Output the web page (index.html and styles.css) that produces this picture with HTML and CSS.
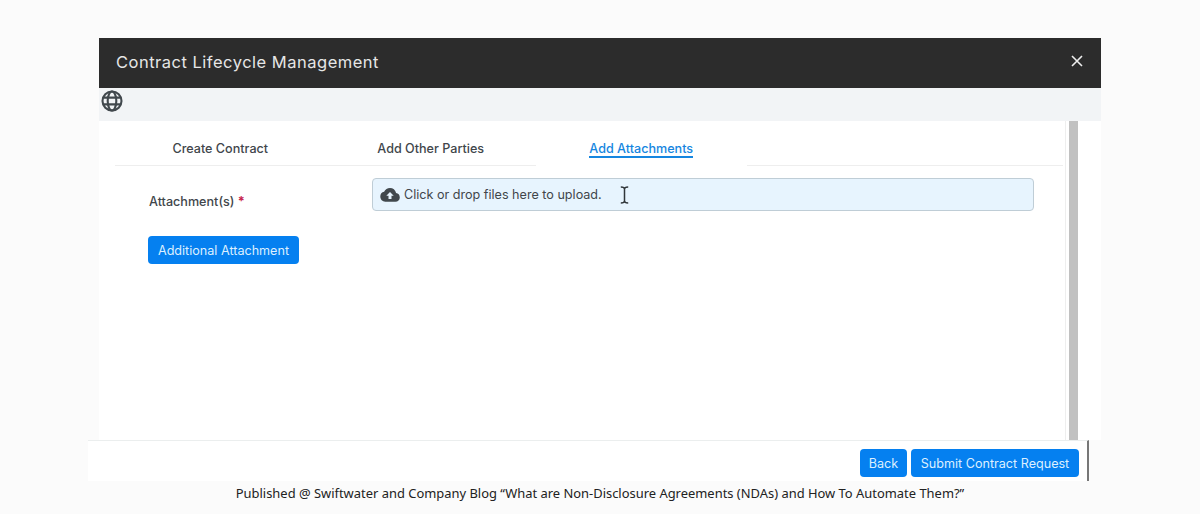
FILE: index.html
```html
<!DOCTYPE html>
<html lang="en">
  <head>
    <meta charset="UTF-8" />
    <meta name="viewport" content="width=device-width, initial-scale=1" />
    <title>Contract Lifecycle Management</title>
    <link rel="stylesheet" href="styles.css">
  </head>
  <body>
    <section class="dialog">
      <header>
        <h1>Contract Lifecycle Management</h1>
        <button class="close" aria-label="Close">
          <svg width="12" height="12" viewBox="0 0 12 12"><path d="M1 1l10 10M11 1L1 11" /></svg>
        </button>
      </header>
      <div class="toolbar">
        <svg class="globe" width="22" height="22" viewBox="0 0 22 22">
          <circle cx="11" cy="11" r="9.5" />
          <ellipse cx="11" cy="11" rx="4.3" ry="9.5" />
          <path d="M2.200 7.600h17.600M2.200 14.400h17.600" />
        </svg>
      </div>
      <div class="content">
        <main>
          <nav class="tabs">
            <a class="tab">Create Contract</a>
            <a class="tab">Add Other Parties</a>
            <a class="tab active"><span>Add Attachments</span></a>
            <div class="tab-rest"></div>
          </nav>
          <div class="field">
            <label>Attachment(s) <span class="required">*</span></label>
            <div class="dropzone">
              <svg class="cloud" width="20" height="16" viewBox="0 0 20 16">
                <path d="M16.1 6.1C15.5 2.900 12.900 1 10 1 7.400 1 5.200 2.400 4.100 4.800 1.700 5.200.3 7.100.3 9.500c0 2.900 2.200 5.200 5 5.200h10.100c2.500 0 4.400-1.900 4.400-4.300 0-2.300-1.600-4.100-3.700-4.300zM11.500 8.700v3.400h-3V8.700H6.300L10 4.900l3.700 3.800z" />
              </svg>
              <span>Click or drop files here to upload.</span>
              <svg class="cursor" width="9" height="18" viewBox="0 0 9 18">
                <path d="M.8 1C3 1 4.500 1.500 4.500 3v12c0 1.500-1.500 2-3.700 2M8.200 1C6 1 4.500 1.500 4.500 3M8.200 17c-2.200 0-3.700-.5-3.700-2" />
              </svg>
            </div>
          </div>
          <button class="btn additional">Additional Attachment</button>
        </main>
        <div class="scrollbar"></div>
      </div>
    </section>
    <div class="actions">
      <button class="btn back">Back</button>
      <button class="btn submit">Submit Contract Request</button>
    </div>
    <footer>Published @ Swiftwater and Company Blog “What are Non-Disclosure Agreements (NDAs) and How To Automate Them?”</footer>
  </body>
</html>
```

FILE: styles.css
```css
* {
  box-sizing: border-box;
}

body {
  margin: 0;
  padding-top: 38px;
  height: 514px;
  background: #fbfbfb;
  font-family: Inter, 'Liberation Sans', sans-serif;
  font-size: 12.6px;
  color: #41464b;
  overflow: hidden;
}

.dialog {
  width: 1002px;
  margin-left: 99px;
  background: #fff;
}

header {
  display: flex;
  align-items: center;
  justify-content: space-between;
  height: 50px;
  padding: 0 18px 2px 17px;
  background: #2c2c2c;
}

h1 {
  margin: 0;
  font-size: 16.5px;
  font-weight: 400;
  letter-spacing: 0.5px;
  color: #e6e6e6;
}

button {
  font-family: inherit;
  border: none;
}

.close {
  display: flex;
  padding: 0 0 2px;
  background: none;
}

.close path {
  fill: none;
  stroke: #eee;
  stroke-width: 1.6;
}

.toolbar {
  height: 33px;
  padding: 2px;
  background: #f2f4f6;
}

.globe {
  display: block;
  fill: none;
  stroke: #41484d;
  stroke-width: 2.1;
}

.content {
  display: flex;
  height: 319px;
}

main {
  width: 967px;
  padding: 0 2px 0 16px;
  border-right: 1px solid #eeeeee;
}

.tabs {
  display: flex;
  height: 45px;
}

.tab {
  width: 210.5px;
  padding-top: 20px;
  border-bottom: 1px solid #eeeeee;
  font-weight: 500;
  line-height: 16px;
  text-align: center;
}

.tab.active {
  border-bottom: none;
  color: #1686e0;
}

.tab.active span {
  display: inline-block;
  height: 17px;
  border-bottom: 2px solid #1686e0;
}

.tab-rest {
  flex: 1;
  border-bottom: 1px solid #eeeeee;
}

.field {
  display: flex;
  padding: 12px 29px 0 34px;
}

label {
  width: 223px;
  padding-top: 15px;
  font-weight: 500;
  line-height: 17px;
}

.required {
  font-weight: 700;
  color: #c7254e;
}

.dropzone {
  display: flex;
  align-items: center;
  flex: 1;
  height: 33px;
  padding-left: 7px;
  border: 1px solid #bfcdd6;
  border-radius: 4px;
  background: #e7f4fe;
}

.cloud {
  margin-right: 4px;
  fill: #41484d;
}

.cursor {
  margin-left: 18px;
  fill: none;
  stroke: #30363a;
  stroke-width: 1.5;
}

.btn {
  height: 28px;
  padding: 0;
  border-radius: 4px;
  background: #0580f0;
  color: #dcefff;
  font-size: 12.6px;
  white-space: nowrap;
}

.additional {
  width: 151px;
  margin: 25px 0 0 33px;
}

.scrollbar {
  width: 9px;
  margin-left: 3px;
  background: #c1c1c1;
}

.actions {
  display: flex;
  gap: 4px;
  justify-content: flex-end;
  width: 1001px;
  height: 41px;
  margin-left: 88px;
  padding: 8px 8px 0 0;
  border-top: 1px solid #ebeeee;
  border-right: 2px solid #777;
  background: #fff;
}

.back {
  width: 47px;
}

.submit {
  width: 168px;
}

footer {
  padding-top: 3px;
  font-family: 'Noto Sans', sans-serif;
  font-size: 12.93px;
  line-height: 18px;
  text-align: center;
  color: #222;
}
```
